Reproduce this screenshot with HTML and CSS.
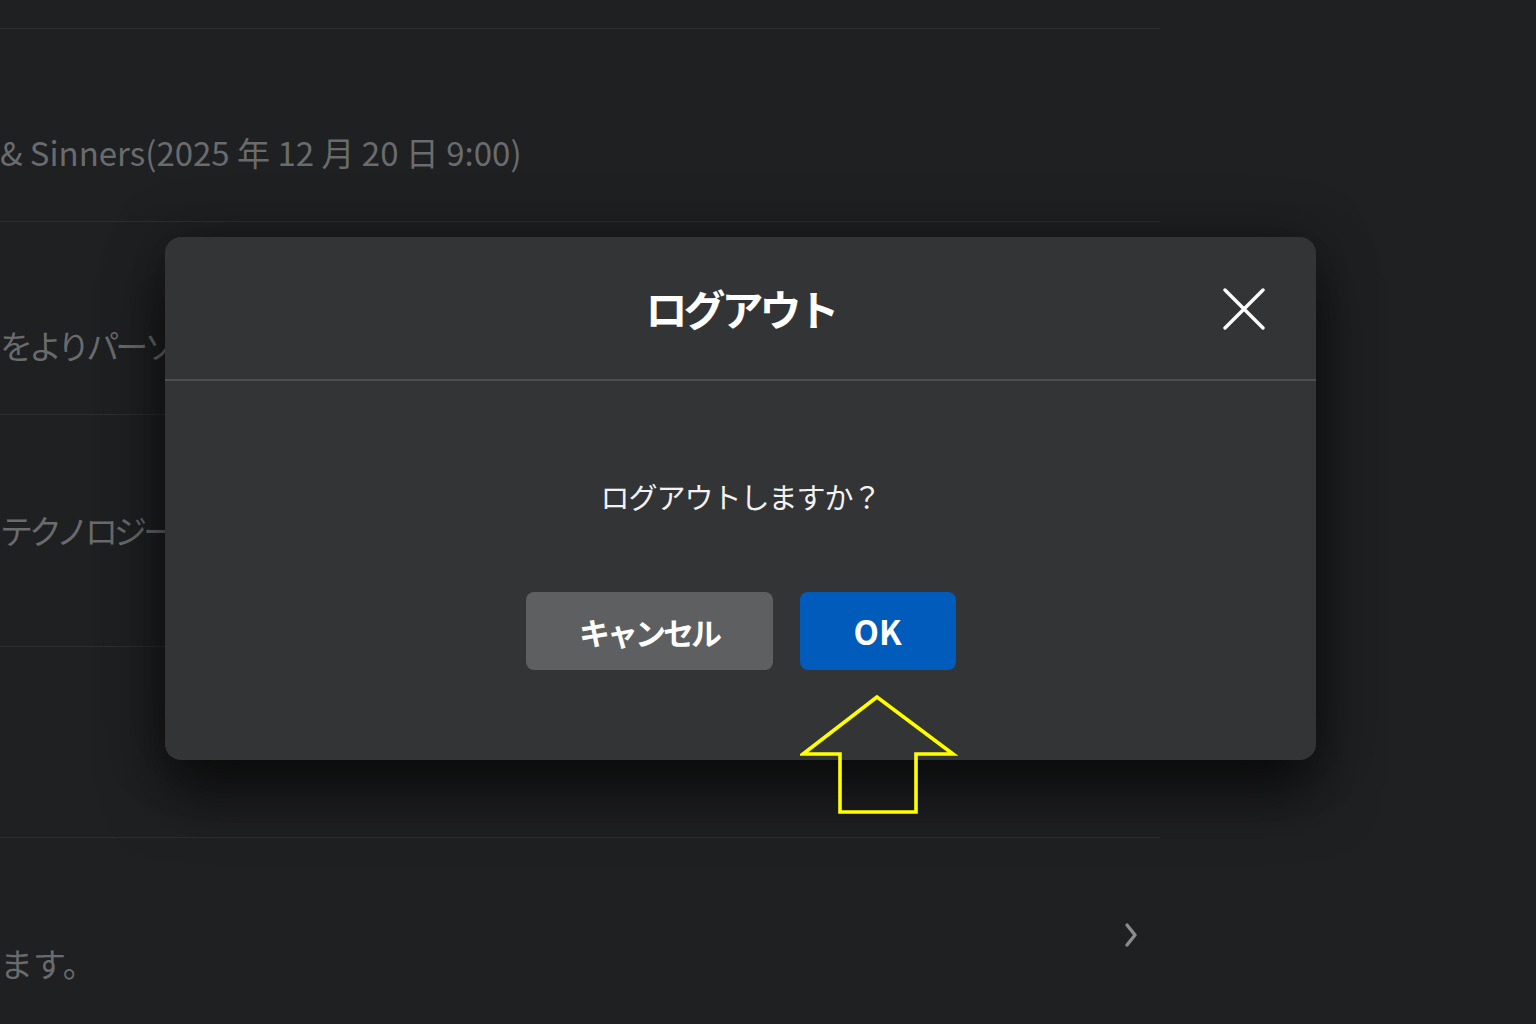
FILE: index.html
```html
<!DOCTYPE html>
<html lang="ja">
<head>
<meta charset="utf-8">
<title>ログアウト</title>
<link rel="stylesheet" href="styles.css">
</head>
<body>
  <main class="page">
    <ul class="list">
      <li class="row row-top"></li>
      <li class="row"><p class="row-text">&amp; Sinners(2025 年 12 月 20 日 9:00)</p></li>
      <li class="row"><p class="row-text row-text-ja">をよりパーソナライズ</p></li>
      <li class="row row-tall"><p class="row-text row-text-ja">テクノロジー全体</p></li>
      <li class="row row-empty"></li>
      <li class="row row-last">
        <p class="row-text row-text-low">ます。</p>
        <svg class="chevron" viewBox="0 0 14 26" width="14" height="26" aria-hidden="true">
          <path d="M3 3 L11 13 L3 23" fill="none" stroke="#8b8c8e" stroke-width="3.4" stroke-linecap="round" stroke-linejoin="round"/>
        </svg>
      </li>
    </ul>
  </main>

  <section class="dialog" role="dialog" aria-labelledby="dlg-title">
    <header class="dialog-head">
      <h2 id="dlg-title" class="dialog-title">ログアウト</h2>
      <button class="dialog-close" aria-label="閉じる">
        <svg viewBox="0 0 42 42" width="42" height="42">
          <path d="M2 2 L40 40 M40 2 L2 40" fill="none" stroke="#ffffff" stroke-width="3.4" stroke-linecap="round"/>
        </svg>
      </button>
    </header>
    <div class="dialog-body">
      <p class="dialog-msg">ログアウトしますか？</p>
      <div class="dialog-actions">
        <button class="btn btn-cancel">キャンセル</button>
        <button class="btn btn-ok">OK</button>
      </div>
    </div>
  </section>

  <svg class="pointer" viewBox="0 0 160 124" width="160" height="124" aria-hidden="true">
    <polygon points="77,3 3,60 40,60 40,118 116,118 116,60 153,60" fill="none" stroke="#ffff00" stroke-width="3.6" stroke-linejoin="miter"/>
  </svg>
</body>
</html>
```

FILE: styles.css
```css
* { box-sizing: border-box; }

html, body {
  margin: 0;
  padding: 0;
  width: 1536px;
  height: 1024px;
  overflow: hidden;
  background: #1f2022;
  font-family: "Noto Sans CJK JP", "Noto Sans", sans-serif;
}

.page {
  width: 1536px;
  height: 1024px;
}

.list {
  list-style: none;
  margin: 0;
  padding: 0;
  width: 1160px;
}

.row {
  position: relative;
  height: 193px;
  border-bottom: 1px solid #2d2e30;
}

.row-top { height: 29px; }
.row-tall { height: 232px; }
.row-empty { height: 191px; }
.row-last { height: 188px; border-bottom: none; }

.row-text {
  margin: 0;
  padding-top: 103px;
  font-size: 33px;
  line-height: 40px;
  color: #6a6b6d;
  white-space: nowrap;
}

.row-text-ja { letter-spacing: -4px; }
.row-tall .row-text { padding-top: 95px; }
.row-last .row-text { padding-top: 105px; }

.chevron {
  position: absolute;
  right: 22px;
  top: 84px;
}

/* modal */
.dialog {
  position: absolute;
  left: 165px;
  top: 237px;
  width: 1151px;
  height: 523px;
  background: #333436;
  border-radius: 16px;
  box-shadow: 0 34px 60px rgba(0, 0, 0, 0.6), 0 0 60px rgba(0, 0, 0, 0.3);
  display: flex;
  flex-direction: column;
}

.dialog-head {
  position: relative;
  height: 144px;
  border-bottom: 2px solid #4e4f51;
  display: flex;
  align-items: center;
  justify-content: center;
}

.dialog-title {
  margin: 0;
  font-size: 42px;
  font-weight: 700;
  color: #ffffff;
  line-height: 1;
  letter-spacing: -4px;
}

.dialog-close {
  position: absolute;
  right: 51px;
  top: 51px;
  width: 42px;
  height: 42px;
  padding: 0;
  border: none;
  background: none;
  display: flex;
}

.dialog-body {
  flex: 1;
  display: flex;
  flex-direction: column;
  align-items: center;
  padding-top: 95px;
}

.dialog-msg {
  margin: 0;
  font-size: 29px;
  line-height: 40px;
  color: #f2f2f2;
  letter-spacing: -1px;
}

.dialog-actions {
  margin-top: 76px;
  display: flex;
  gap: 27px;
}

.btn {
  height: 78px;
  border: none;
  border-radius: 8px;
  color: #ffffff;
  font-family: inherit;
  font-weight: 700;
  font-size: 31px;
  padding: 0;
  display: flex;
  align-items: center;
  justify-content: center;
}

.btn-cancel {
  width: 247px;
  background: #5e5f61;
  letter-spacing: -3px;
}

.btn-ok {
  width: 156px;
  background: #005bbb;
  font-size: 33px;
}

.pointer {
  position: absolute;
  left: 800px;
  top: 694px;
}
```
